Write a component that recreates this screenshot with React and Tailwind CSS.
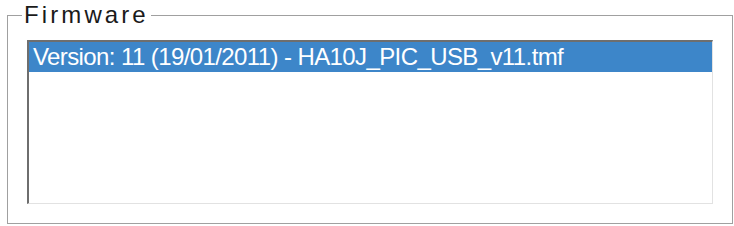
import React from 'react';

const firmwareList = [
  { id: 11, label: 'Version: 11 (19/01/2011) - HA10J_PIC_USB_v11.tmf' },
];

const App = () => {
  return (
    <div className="w-[734px] h-[226px] bg-white font-['Liberation_Sans',Arial,sans-serif] text-[#1a1a1a]">
      <fieldset className="ml-[7px] w-[726px] h-[224px] border border-[#a0a0a0]">
        <legend className="ml-[14px] px-[2px] text-[24px] leading-[30px] tracking-[3.1px]">
          Firmware
        </legend>

        {/* Listbox */}
        <div className="mt-[10px] ml-[19px] w-[686px] h-[164px] bg-white border-t-2 border-l-2 border-r border-b border-t-[#6e6e6e] border-l-[#6e6e6e] border-r-[#e2e2e2] border-b-[#e2e2e2]">
          {firmwareList.map((item, i) => (
            <div
              key={item.id}
              className={
                i === 0
                  ? 'h-[30px] bg-[#3d86c9] text-white pl-[4px] text-[24px] leading-[30px] tracking-[-0.6px] whitespace-nowrap'
                  : 'h-[30px] pl-[4px] text-[24px] leading-[30px] whitespace-nowrap'
              }
            >
              {item.label}
            </div>
          ))}
        </div>
      </fieldset>
    </div>
  );
};

export default App;
